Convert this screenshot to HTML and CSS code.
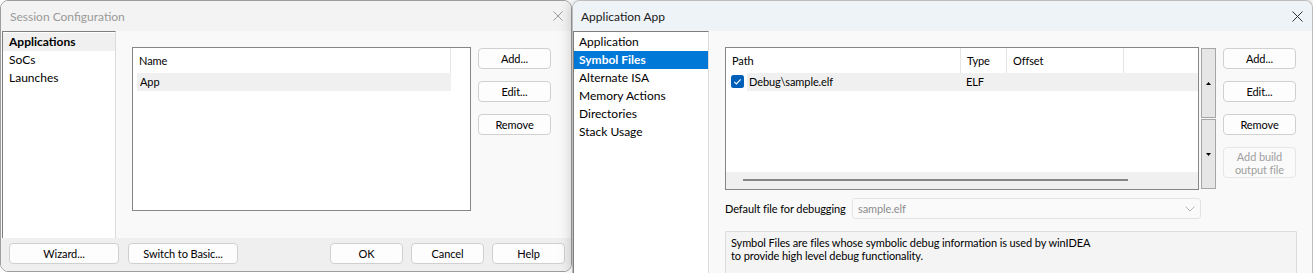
FILE: index.html
```html
<!DOCTYPE html>
<html>
<head>
<meta charset="utf-8">
<title>Session Configuration</title>
<link rel="stylesheet" href="styles.css">
</head>
<body>
<div class="screen">
  <section class="dlg dlg-left">
    <header class="titlebar tb-inactive">
      <span class="title">Session Configuration</span>
      <svg class="close" width="10" height="10" viewBox="0 0 10 10"><path d="M0.5 0.5L9.5 9.5M9.5 0.5L0.5 9.5"/></svg>
    </header>
    <div class="dlg-body">
      <ul class="side side-left">
        <li class="item sel-inactive">Applications</li>
        <li class="item">SoCs</li>
        <li class="item">Launches</li>
      </ul>
      <div class="main-left">
        <div class="table table-left">
          <div class="thead"><div class="th th-name">Name</div></div>
          <div class="trow"><div class="rowbg rowbg-left">App</div></div>
        </div>
        <div class="btn-col">
          <button class="btn">Add...</button>
          <button class="btn">Edit...</button>
          <button class="btn">Remove</button>
        </div>
      </div>
    </div>
    <footer class="footer">
      <button class="btn btn-wide">Wizard...</button>
      <button class="btn btn-wide">Switch to Basic...</button>
      <div class="footer-right">
        <button class="btn">OK</button>
        <button class="btn">Cancel</button>
        <button class="btn">Help</button>
      </div>
    </footer>
  </section>

  <section class="dlg dlg-right">
    <header class="titlebar tb-active">
      <span class="title">Application App</span>
      <svg class="close" width="11" height="11" viewBox="0 0 11 11"><path d="M0.5 0.5L10.5 10.5M10.5 0.5L0.5 10.5"/></svg>
    </header>
    <div class="dlg-body">
      <ul class="side side-right">
        <li class="item">Application</li>
        <li class="item sel">Symbol Files</li>
        <li class="item">Alternate ISA</li>
        <li class="item">Memory Actions</li>
        <li class="item">Directories</li>
        <li class="item">Stack Usage</li>
      </ul>
      <div class="main-right">
        <div class="row1">
          <div class="table table-right">
            <div class="thead">
              <div class="th th-path">Path</div>
              <div class="th th-type">Type</div>
              <div class="th th-offset">Offset</div>
            </div>
            <div class="trow">
              <div class="chkcell">
                <svg class="chk" width="13" height="13" viewBox="0 0 13 13"><rect x="0" y="0" width="13" height="13" rx="2.5" fill="#005fb8"/><path d="M3.3 6.8L5.4 8.9L9.7 4.4" fill="none" stroke="#fff" stroke-width="1.1"/></svg>
              </div>
              <div class="rowbg rowbg-right">
                <span class="c-path">Debug\sample.elf</span>
                <span class="c-type">ELF</span>
              </div>
            </div>
            <div class="hscroll"><div class="thumb"></div></div>
          </div>
          <div class="vscroll">
            <div class="sbtn"><svg width="5" height="3" viewBox="0 0 5 3"><path d="M0 3L2.5 0L5 3Z" fill="#000"/></svg></div>
            <div class="sbtn"><svg width="5" height="3" viewBox="0 0 5 3"><path d="M0 0L2.5 3L5 0Z" fill="#000"/></svg></div>
          </div>
          <div class="btn-col btn-col-right">
            <button class="btn">Add...</button>
            <button class="btn">Edit...</button>
            <button class="btn">Remove</button>
            <button class="btn btn-disabled">Add build<br>output file</button>
          </div>
        </div>
        <div class="row2">
          <span class="label">Default file for debugging</span>
          <div class="combo">
            <span class="combo-text">sample.elf</span>
            <svg width="10" height="6" viewBox="0 0 10 6"><path d="M0.5 0.5L5 5L9.5 0.5" fill="none" stroke="#b4b4b4" stroke-width="1"/></svg>
          </div>
        </div>
        <div class="desc">Symbol Files are files whose symbolic debug information is used by winIDEA<br>to provide high level debug functionality.</div>
      </div>
    </div>
  </section>
</div>
</body>
</html>
```

FILE: styles.css
```css
* { box-sizing: border-box; }

body {
  margin: 0;
  width: 1313px;
  height: 273px;
  overflow: hidden;
  background: #ffffff;
  font-family: "Lato", "Noto Sans", sans-serif;
  font-size: 11px;
  letter-spacing: -0.1px;
  color: #000;
}

.screen {
  display: flex;
  height: 273px;
}

.dlg {
  display: flex;
  flex-direction: column;
  flex: none;
  border: 1px solid #bdbdbd;
  background: #f9f9f9;
  overflow: hidden;
}

.dlg-left {
  width: 572px;
  height: 272px;
  border-color: #9e9e9e;
  border-radius: 8px;
}

.dlg-right {
  width: 741px;
  height: 273px;
  border-bottom: none;
  border-radius: 8px 8px 0 0;
  box-shadow: 0 0 14px rgba(0, 0, 0, 0.22);
}

.titlebar {
  height: 30px;
  flex: none;
  display: flex;
  align-items: center;
  justify-content: space-between;
}

.title {
  font-size: 12px;
  letter-spacing: 0;
}

.tb-inactive {
  background: #f3f3f3;
  color: #9a9a9a;
  padding: 0 8px 0 9px;
}

.tb-active {
  background: #eef3f8;
  color: #1a1a1a;
  padding: 0 9px 0 8px;
}

.close path {
  stroke: currentColor;
  stroke-width: 1;
  fill: none;
}

.tb-active .close { color: #333; }

.dlg-body {
  flex: 1;
  display: flex;
  min-height: 0;
}

.side {
  list-style: none;
  margin: 0;
  padding: 1px 0 0;
  background: #fff;
  border-left: 1px solid #7d7d7d;
  border-top: 1px solid #7d7d7d;
  border-right: 1px solid #dcdcdc;
  flex: none;
}

.side-left { width: 114px; margin-left: 1px; }
.side-right { width: 136px; }

.item {
  height: 18px;
  line-height: 18px;
  padding-left: 6px;
  white-space: nowrap;
  font-size: 12px;
  letter-spacing: 0;
}

.side-right .item { padding-left: 5px; }

.sel-inactive {
  background: #f0f0f0;
  font-weight: 700;
}

.sel {
  background: #0078d7;
  color: #fff;
  font-weight: 700;
}

/* tables */
.table {
  border: 1px solid #868686;
  background: #fff;
  display: flex;
  flex-direction: column;
  flex: none;
}

.thead {
  height: 25px;
  display: flex;
  flex: none;
}

.th {
  line-height: 25px;
  padding-left: 6px;
  border-right: 1px solid #e5e5e5;
  white-space: nowrap;
}

.trow {
  height: 18px;
  display: flex;
  flex: none;
}

.rowbg {
  background: #f0f0f0;
  line-height: 18px;
  white-space: nowrap;
}

/* left dialog */
.main-left {
  flex: 1;
  display: flex;
  align-items: flex-start;
  padding: 16px 0 0 16px;
  gap: 7px;
}

.table-left {
  width: 339px;
  height: 164px;
}

.th-name { width: 318px; }

.rowbg-left {
  margin-left: 4px;
  width: 314px;
  padding-left: 3px;
}

.btn-col {
  display: flex;
  flex-direction: column;
  gap: 12px;
  padding-top: 1px;
  width: 73px;
  flex: none;
}

.btn {
  height: 21px;
  width: 73px;
  padding: 0;
  border: 1px solid #d0d0d0;
  border-radius: 4px;
  background: #fdfdfd;
  font: inherit;
  letter-spacing: inherit;
  color: #000;
  text-align: center;
}

.btn-wide { width: 110px; }

.btn-disabled {
  height: 31px;
  line-height: 13px;
  color: #a0a0a0;
  border-color: #e6e6e6;
  background: #fafafa;
}

.footer {
  height: 33px;
  flex: none;
  background: #efefef;
  display: flex;
  align-items: flex-start;
  padding: 5px 6px 0 8px;
  gap: 9px;
}

.footer-right {
  margin-left: auto;
  display: flex;
  gap: 8px;
}

/* right dialog */
.main-right {
  flex: 1;
  display: flex;
  flex-direction: column;
  padding: 16px 0 0 16px;
  min-height: 0;
}

.row1 {
  display: flex;
  align-items: flex-start;
}

.table-right {
  width: 474px;
  height: 143px;
}

.th-path { width: 235px; }
.th-type { width: 46px; }
.th-offset { width: 117px; }

.chkcell {
  width: 21px;
  flex: none;
  padding: 2px 0 0 5px;
}

.chk { display: block; }

.rowbg-right {
  flex: 1;
  display: flex;
}

.c-path { width: 213px; padding-left: 2px; }
.c-type { padding-left: 6px; }

.hscroll {
  margin-top: auto;
  height: 17px;
  background: #f0f0f0;
  padding: 7px 0 0 17px;
}

.thumb {
  width: 385px;
  height: 2px;
  background: #868686;
}

.vscroll {
  margin: 1px 0 0 2px;
  width: 15px;
  display: flex;
  flex-direction: column;
  gap: 1px;
  flex: none;
}

.sbtn {
  height: 70px;
  border: 1px solid #a6a6a6;
  background: #e6e6e6;
  display: flex;
  align-items: center;
  justify-content: center;
}

.sbtn svg { display: block; }

.btn-col-right { margin-left: 7px; }

.row2 {
  margin-top: 8px;
  display: flex;
  align-items: center;
}

.label {
  width: 127px;
  flex: none;
  white-space: nowrap;
}

.combo {
  width: 349px;
  height: 21px;
  border: 1px solid #e3e3e3;
  border-radius: 3px;
  background: #fafafa;
  display: flex;
  align-items: center;
  justify-content: space-between;
  padding: 0 5px 0 5px;
  color: #8c8c8c;
}

.desc {
  margin-top: 12px;
  width: 572px;
  flex: 1;
  min-height: 0;
  background: #f4f4f4;
  border: 1px solid #dcdcdc;
  border-bottom: none;
  border-radius: 2px 2px 0 0;
  padding: 4px 5px;
  line-height: 13px;
}
```
